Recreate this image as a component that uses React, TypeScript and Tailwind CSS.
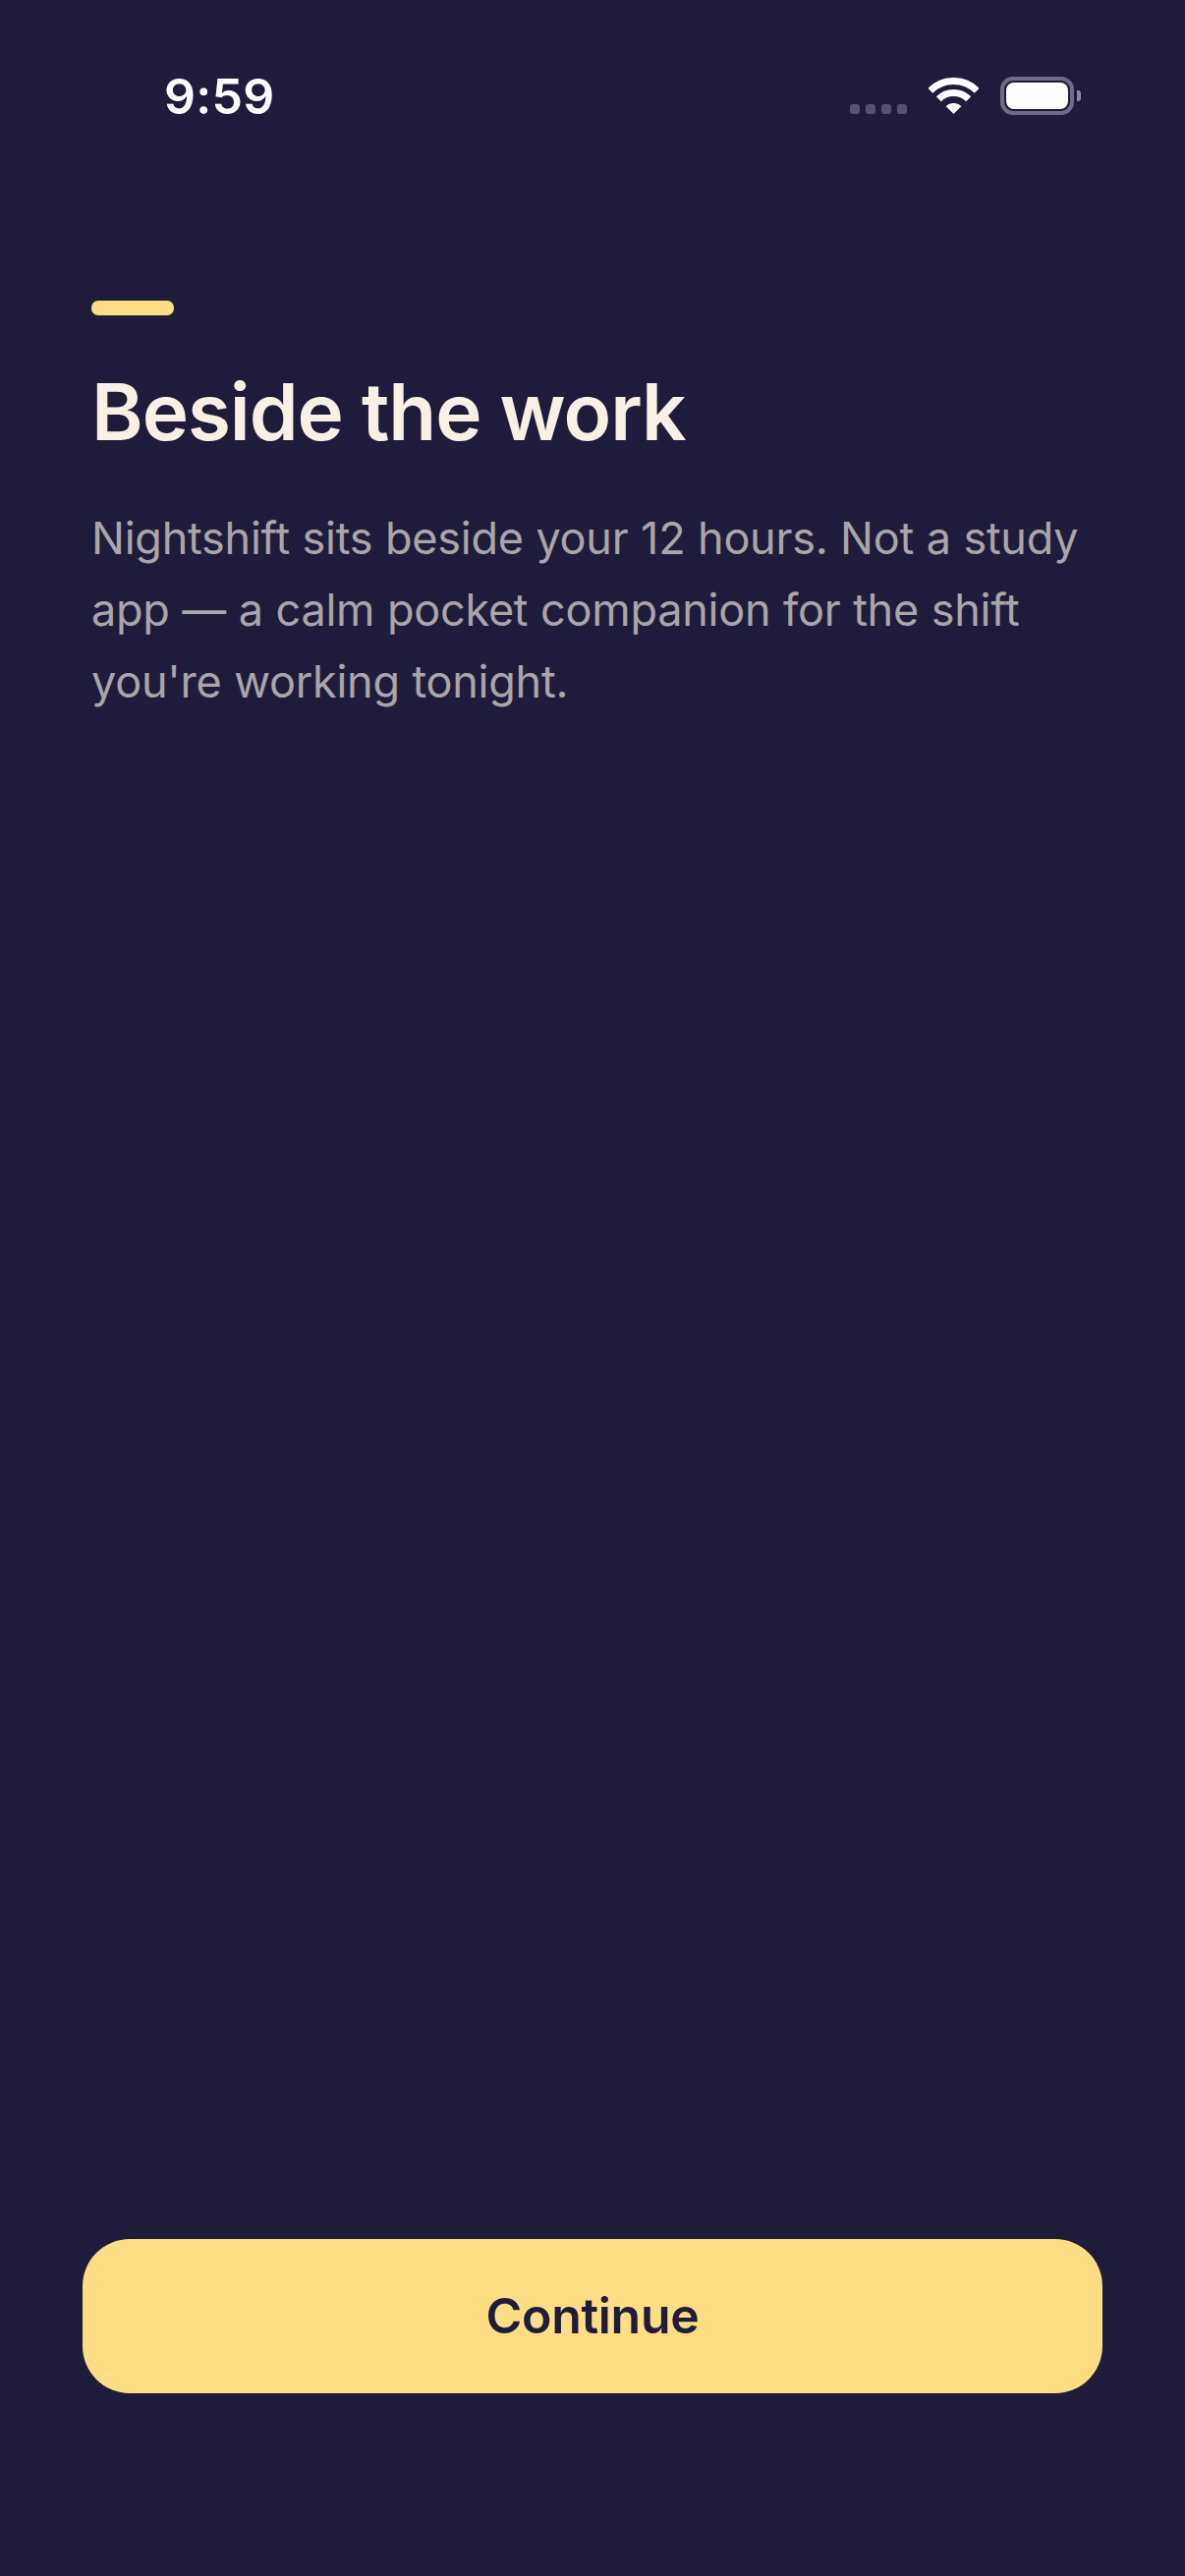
export default function App() {
  return (
    <div className="relative flex h-[2622px] w-[1206px] flex-col bg-[#1f1c3b] font-['Inter',sans-serif]">
      <div className="flex h-[196px] shrink-0 items-start justify-between pl-[167px] pr-[106px] pt-[70px]">
        <span className="text-[50px] leading-[56px] font-semibold tracking-[0.3px] text-white">9:59</span>
        <div className="mt-[8px] flex h-[39px] items-end gap-[22px]">
          <div className="mb-[1px] flex gap-[6px]">
            <span className="h-[10px] w-[10px] rounded-[3px] bg-[#55536e]" />
            <span className="h-[10px] w-[10px] rounded-[3px] bg-[#55536e]" />
            <span className="h-[10px] w-[10px] rounded-[3px] bg-[#55536e]" />
            <span className="h-[10px] w-[10px] rounded-[3px] bg-[#55536e]" />
          </div>
          <svg className="mb-[1px]" width="51" height="37" viewBox="0 0 51 37" fill="none" stroke="#fff" strokeWidth="7">
            <path d="M1.8 13.3 A33.5 33.5 0 0 1 49.2 13.3" />
            <path d="M10.3 21.8 A21.5 21.5 0 0 1 40.7 21.8" />
            <path d="M25.5 37 L17.7 29.2 A11 11 0 0 1 33.3 29.2 Z" fill="#fff" stroke="none" />
          </svg>
          <div className="flex items-center">
            <div className="h-[39px] w-[75px] rounded-[13px] border-[4px] border-[#6f6c86] p-[2px]">
              <div className="h-full w-full rounded-[8px] bg-white" />
            </div>
            <div className="ml-[3px] h-[11px] w-[4px] rounded-r-[3px] bg-[#8b899c]" />
          </div>
        </div>
      </div>
      <div className="flex flex-1 flex-col px-[93px] pt-[110px]">
        <div className="h-[15px] w-[84px] rounded-[7px] bg-[#ffdd85]" />
        <h1 className="mt-[50px] text-[80px] leading-[96px] font-semibold tracking-[-1.05px] text-[#f9f0e5]">Beside the work</h1>
        <p className="mt-[44px] text-[45px] leading-[73px] tracking-[-0.25px] [word-spacing:0.3px] text-[#aba5a9]">
          Nightshift sits beside your 12 hours. Not a study app — a calm pocket companion for the shift you're working tonight.
        </p>
      </div>
      <div className="px-[84px] pb-[186px]">
        <button className="flex h-[157px] w-full items-center justify-center rounded-[48px] bg-[#ffdd85] text-[50px] font-semibold tracking-[-0.3px] text-[#1f1c3b]">
          Continue
        </button>
      </div>
    </div>
  );
}
